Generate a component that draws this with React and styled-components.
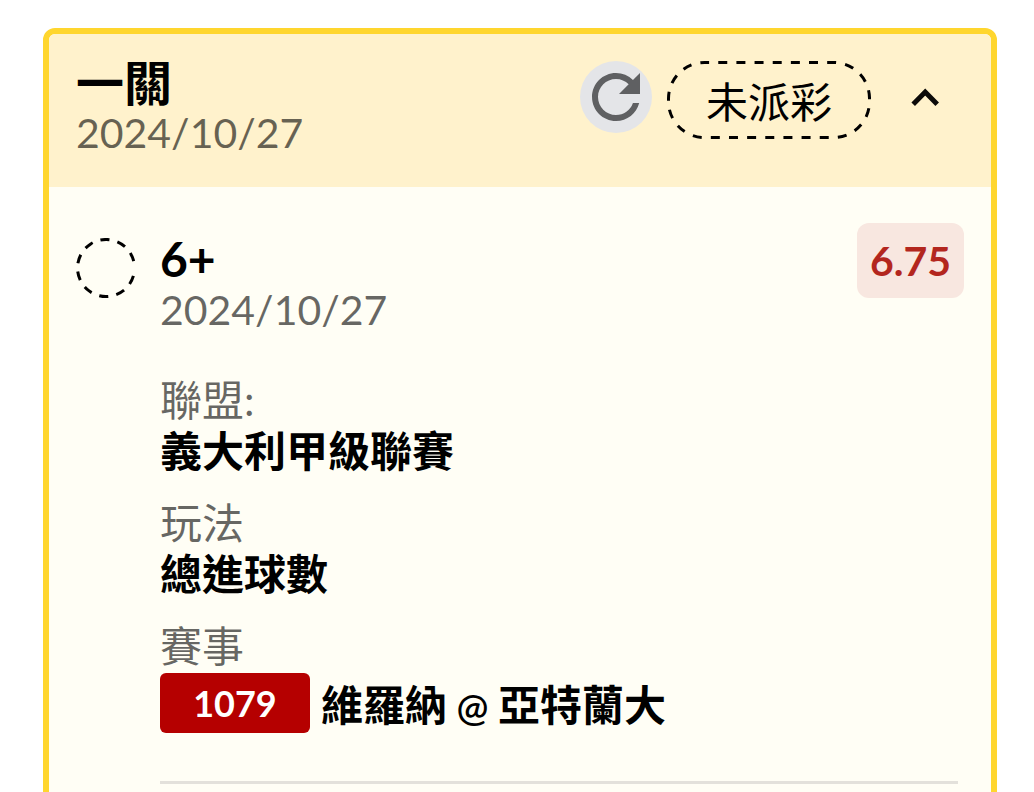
import * as React from 'react';
import styled, { createGlobalStyle } from 'styled-components';
import { MdRefresh } from 'react-icons/md';


const bet = {
    title: '一關',
    date: '2024/10/27',
    status: '未派彩',
    legs: [
        {
            pick: '6+',
            date: '2024/10/27',
            odds: '6.75',
            league: '義大利甲級聯賽',
            market: '總進球數',
            code: '1079',
            away: '維羅納',
            home: '亞特蘭大',
        },
    ],
};

const Leg = ({ leg }) => {
    return (
        <LegRow>
            <PendingMark viewBox="0 0 60 60" aria-hidden="true">
                <path d="M57.4 37.9A28.5 28.5 0 1 1 57.8 23.6" />
            </PendingMark>

            <LegInfo>
                <Pick>{leg.pick}</Pick>
                <DateText>{leg.date}</DateText>

                <Details>
                    <div>
                        <dt>聯盟:</dt>
                        <dd>{leg.league}</dd>
                    </div>
                    <div>
                        <dt>玩法</dt>
                        <dd>{leg.market}</dd>
                    </div>
                    <div>
                        <dt>賽事</dt>
                        <Match>
                            <Code>{leg.code}</Code>
                            <Teams>{leg.away}<At> @ </At>{leg.home}</Teams>
                        </Match>
                    </div>
                </Details>
            </LegInfo>

            <Odds>{leg.odds}</Odds>
        </LegRow>
    )
}

const App = () => {
    const [open, setOpen] = React.useState(true);

    return (
        <Page>
            <GlobalStyle />
            <Card>
                <Header>
                    <div>
                        <Title>{bet.title}</Title>
                        <DateText>{bet.date}</DateText>
                    </div>
                    <Actions>
                        <RefreshButton aria-label="重新整理">
                            <MdRefresh />
                        </RefreshButton>
                        <Status>
                            <StatusOutline viewBox="0 0 204 78" preserveAspectRatio="none" aria-hidden="true">
                                <rect x="1.5" y="1.5" width="201" height="75" rx="36" />
                            </StatusOutline>
                            {bet.status}
                        </Status>
                        <ToggleButton
                            aria-label="展開"
                            aria-expanded={open}
                            $open={open}
                            onClick={() => setOpen(!open)}
                        >
                            <svg viewBox="0 0 28 20" aria-hidden="true">
                                <path d="M2.2 16.2L14.2 4.1L26.2 16.2" />
                            </svg>
                        </ToggleButton>
                    </Actions>
                </Header>
                {open && (
                    <Body>
                        {bet.legs.map((leg) => <Leg key={leg.code} leg={leg} />)}
                        <Divider />
                    </Body>
                )}
            </Card>
        </Page>
    )
}

const GlobalStyle = createGlobalStyle`
    * {
        box-sizing: border-box;
    }

    html {
        scrollbar-width: none;
    }

    body {
        margin: 0;
        background: #ffffff;
        color: #000000;
        font-family: Lato, "Noto Sans CJK TC", sans-serif;
        font-size: 42px;
        line-height: 50px;
    }
`;

const Page = styled.main`
    padding: 28px 37px 28px 43px;
`;

const Card = styled.section`
    border: 6px solid #ffd62e;
    border-radius: 12px;
    background: #fffef5;
    overflow: hidden;
`;

const Header = styled.header`
    display: flex;
    justify-content: space-between;
    align-items: flex-start;
    padding: 24px 27px 28px;
    background: #fff2cc;
`;

const Title = styled.h2`
    margin: 0;
    font-size: 48px;
    line-height: 49px;
    font-weight: 700;
`;

const DateText = styled.div`
    color: rgba(0, 0, 0, 0.6);
    font-size: 41px;
    line-height: 52px;
`;

const Actions = styled.div`
    display: flex;
    gap: 15px;
    padding-top: 3px;
`;

const RefreshButton = styled.button`
    width: 72px;
    height: 72px;
    padding: 0;
    border: none;
    border-radius: 50%;
    background: #e4e5e8;
    color: #5f6062;
    font-size: 72px;
    line-height: 0;
`;

const Status = styled.span`
    position: relative;
    height: 78px;
    padding: 0 39px;
    line-height: 82px;
`;

const StatusOutline = styled.svg`
    position: absolute;
    inset: 0;
    width: 100%;
    height: 100%;
    fill: none;
    stroke: #000000;
    stroke-width: 3;
    stroke-dasharray: 9 9.15;
    stroke-dashoffset: 4.4;
`;

const ToggleButton = styled.button`
    display: flex;
    align-items: center;
    justify-content: center;
    width: 78px;
    height: 74px;
    padding: 0;
    border: none;
    background: none;

    svg {
        width: 28px;
        height: 20px;
        fill: none;
        stroke: #0c0b09;
        stroke-width: 5;
        transform: ${(props) => (props.$open ? 'none' : 'rotate(180deg)')};
    }
`;

const Body = styled.div`
    padding: 36px 27px 48px;
`;

const LegRow = styled.article`
    display: flex;
    align-items: flex-start;
`;

const PendingMark = styled.svg`
    flex: none;
    width: 60px;
    height: 60px;
    margin: 15px 24px 0 0;
    fill: none;
    stroke: #000000;
    stroke-width: 3;
    stroke-dasharray: 9 8.2;
`;

const LegInfo = styled.div`
    flex: 1;
    padding-top: 11px;
`;

const Pick = styled.h3`
    margin: 0;
    font-size: 48px;
    line-height: 50px;
    font-weight: 700;
`;

const Details = styled.dl`
    display: flex;
    flex-direction: column;
    gap: 21px;
    margin: 39px 0 0;
    line-height: 51px;

    dt {
        color: rgba(0, 0, 0, 0.6);
    }

    dd {
        margin: 0;
        font-weight: 700;
    }
`;

const Match = styled.dd`
    display: flex;
    align-items: flex-end;
    gap: 11px;
    padding-top: 1px;
`;

const Code = styled.span`
    width: 150px;
    border-radius: 6px;
    background: #b50000;
    color: #ffffff;
    font-size: 36px;
    line-height: 60px;
    text-align: center;
`;

const Teams = styled.span`
    line-height: 54px;
`;

const At = styled.span`
    font-size: 38px;
    font-weight: 600;
`;

const Odds = styled.strong`
    min-width: 107px;
    padding: 0 12px;
    border-radius: 12px;
    background: #f8e7e0;
    color: #b3261e;
    font-size: 41px;
    font-weight: 700;
    line-height: 75px;
    text-align: center;
`;

const Divider = styled.hr`
    height: 3px;
    margin: 48px 6px 0 84px;
    border: none;
    background: #e3e1db;
`;

export default App;
